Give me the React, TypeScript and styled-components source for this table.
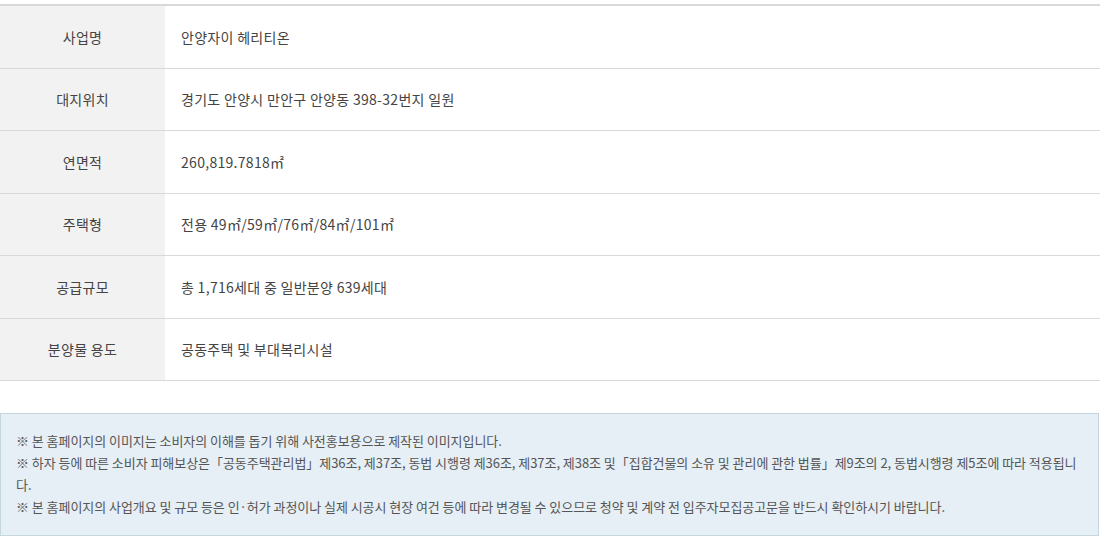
import React from 'react';
import styled, { createGlobalStyle } from 'styled-components';

const GlobalStyle = createGlobalStyle`
  html, body {
    margin: 0;
    padding: 0;
    background: #fff;
  }
  body {
    font-family: 'Noto Sans CJK KR', 'Noto Sans', sans-serif;
    color: #444;
  }
`;

const rows = [
  { label: '사업명', value: '안양자이 헤리티온' },
  { label: '대지위치', value: '경기도 안양시 만안구 안양동 398-32번지 일원' },
  { label: '연면적', value: '260,819.7818㎡' },
  { label: '주택형', value: '전용 49㎡/59㎡/76㎡/84㎡/101㎡' },
  { label: '공급규모', value: '총 1,716세대 중 일반분양 639세대' },
  { label: '분양물 용도', value: '공동주택 및 부대복리시설' },
];

const notices = [
  '※ 본 홈페이지의 이미지는 소비자의 이해를 돕기 위해 사전홍보용으로 제작된 이미지입니다.',
  '※ 하자 등에 따른 소비자 피해보상은「공동주택관리법」제36조, 제37조, 동법 시행령 제36조, 제37조, 제38조 및「집합건물의 소유 및 관리에 관한 법률」제9조의 2, 동법시행령 제5조에 따라 적용됩니다.',
  '※ 본 홈페이지의 사업개요 및 규모 등은 인·허가 과정이나 실제 시공시 현장 여건 등에 따라 변경될 수 있으므로 청약 및 계약 전 입주자모집공고문을 반드시 확인하시기 바랍니다.',
];

const App: React.FC = () => {
  return (
    <Page>
      <GlobalStyle />
      <InfoTable>
        <tbody>
          {rows.map((r) => (
            <tr key={r.label}>
              <Th>{r.label}</Th>
              <Td>{r.value}</Td>
            </tr>
          ))}
        </tbody>
      </InfoTable>

      <NoticeBox>
        {notices.map((n, i) => (
          <NoticeLine key={i}>{n}</NoticeLine>
        ))}
      </NoticeBox>
    </Page>
  );
};

const Page = styled.div`
  width: 1100px;
  padding-top: 4px;
  box-sizing: border-box;
`;

const InfoTable = styled.table`
  width: 100%;
  border-collapse: collapse;
  border-top: 2px solid #d9d9d9;
`;

const Th = styled.th`
  width: 165px;
  height: 61.5px;
  padding: 0;
  background: #f2f2f2;
  border-bottom: 1px solid #d9d9d9;
  font-weight: 400;
  font-size: 14px;
  color: #444;
  text-align: center;
  letter-spacing: 0.3px;
`;

const Td = styled.td`
  height: 61.5px;
  padding: 0 0 0 16px;
  border-bottom: 1px solid #d9d9d9;
  font-size: 14px;
  color: #444;
  text-align: left;
  letter-spacing: 0.3px;
`;

const NoticeBox = styled.div`
  margin-top: 32px;
  width: 1099px;
  box-sizing: border-box;
  padding: 16px 16px 17px 15px;
  background: #e5eff5;
  border: 1px solid #c6d6df;
`;

const NoticeLine = styled.p`
  margin: 0;
  font-size: 13px;
  line-height: 22px;
  color: #555;
  letter-spacing: -0.05px;
`;

export default App;
